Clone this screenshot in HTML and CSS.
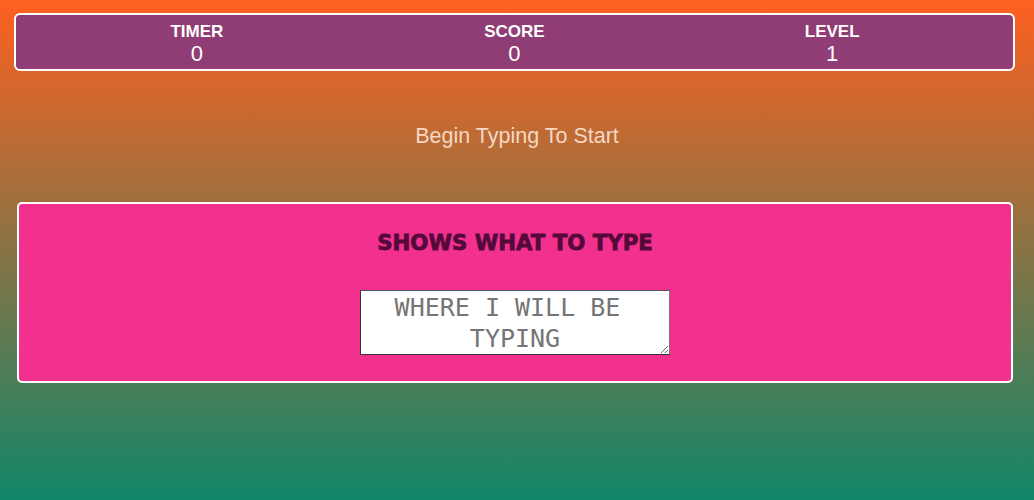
FILE: index.html
```html
<!DOCTYPE html>
<html lang="en">
<head>
<meta charset="utf-8">
<title>Typing Game</title>
<link rel="stylesheet" href="styles.css">
</head>
<body>
<header class="stats">
  <div class="stat"><div class="stat-label">TIMER</div><div class="stat-value">0</div></div>
  <div class="stat"><div class="stat-label">SCORE</div><div class="stat-value">0</div></div>
  <div class="stat"><div class="stat-label">LEVEL</div><div class="stat-value">1</div></div>
</header>
<p class="status">Begin Typing To Start</p>
<section class="play">
  <h2 class="prompt">SHOWS WHAT TO TYPE</h2>
  <textarea class="input" placeholder="WHERE I WILL BE TYPING" autofocus></textarea>
</section>
</body>
</html>
```

FILE: styles.css
```css
html, body {
  margin: 0;
  padding: 0;
}
body {
  width: 1034px;
  height: 500px;
  overflow: hidden;
  background: linear-gradient(to bottom, #ff6020 0%, #108769 100%);
  font-family: "Liberation Sans", Arial, sans-serif;
  padding-top: 13px;
  box-sizing: border-box;
}
.stats {
  box-sizing: border-box;
  width: 1001px;
  margin-left: 14px;
  background: #8f3d74;
  border: 2px solid #fff;
  border-radius: 6px;
  display: grid;
  grid-template-columns: repeat(3, 1fr);
  padding: 7px 22px 3px;
  color: #fff;
  text-align: center;
}
.stat-label {
  font-weight: bold;
  font-size: 17px;
  line-height: 20px;
}
.stat-value {
  font-size: 22px;
  line-height: 24px;
}
.status {
  margin: 53px 0 0;
  text-align: center;
  font-size: 21.5px;
  line-height: 24px;
  color: #f5d8c3;
}
.play {
  box-sizing: border-box;
  width: 996px;
  margin: 54px 0 0 17px;
  background: #f2318e;
  border: 2px solid #fff;
  border-radius: 5px;
  padding: 27px 0 26px;
  text-align: center;
}
.prompt {
  margin: 0;
  font-family: "DejaVu Sans", sans-serif;
  font-weight: bold;
  font-size: 21.3px;
  line-height: 24px;
  color: #55093a;
  -webkit-text-stroke: 0.8px #55093a;
}
.input {
  display: block;
  box-sizing: border-box;
  width: 310px;
  height: 65px;
  margin: 35px auto 0;
  padding: 1px 2px 0;
  border: 1px solid #333;
  border-top-color: #555;
  border-right-color: #767676;
  background: #fff;
  font-family: "DejaVu Sans Mono", monospace;
  font-size: 25px;
  line-height: 31px;
  text-align: center;
  outline: none;
  resize: both;
}
.input::placeholder {
  color: #757575;
  white-space: break-spaces;
}
```
